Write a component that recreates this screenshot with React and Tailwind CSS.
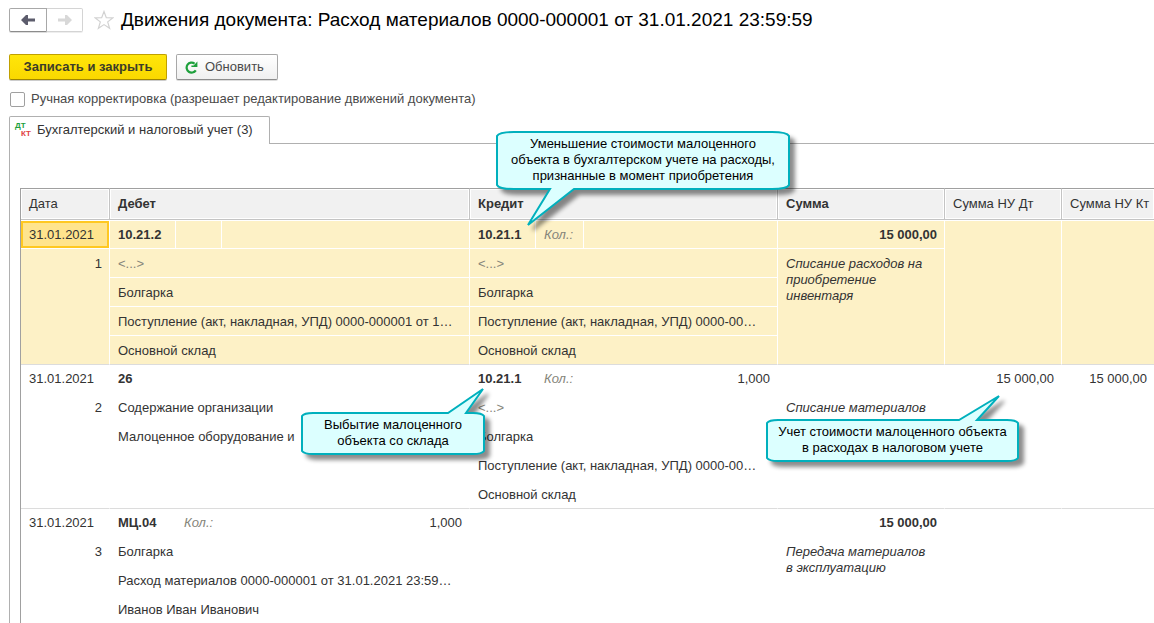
import { clsx } from 'clsx';

const entries = [
  {
    id: 1,
    date: '31.01.2021',
    selected: true,
    debit: { account: '10.21.2', lines: ['<...>', 'Болгарка', 'Поступление (акт, накладная, УПД) 0000-000001 от 1…', 'Основной склад'] },
    credit: { account: '10.21.1', label: 'Кол.:', lines: ['<...>', 'Болгарка', 'Поступление (акт, накладная, УПД) 0000-00…', 'Основной склад'] },
    sum: '15 000,00',
    note: ['Списание расходов на', 'приобретение', 'инвентаря'],
  },
  {
    id: 2,
    date: '31.01.2021',
    debit: { account: '26', lines: ['Содержание организации', 'Малоценное оборудование и'] },
    credit: { account: '10.21.1', label: 'Кол.:', qty: '1,000', lines: ['<...>', 'Болгарка', 'Поступление (акт, накладная, УПД) 0000-00…', 'Основной склад'] },
    note: ['Списание материалов'],
    taxDebit: '15 000,00',
    taxCredit: '15 000,00',
  },
  {
    id: 3,
    date: '31.01.2021',
    debit: { account: 'МЦ.04', label: 'Кол.:', qty: '1,000', lines: ['Болгарка', 'Расход материалов 0000-000001 от 31.01.2021 23:59…', 'Иванов Иван Иванович'] },
    sum: '15 000,00',
    note: ['Передача материалов', 'в эксплуатацию'],
  },
];

function ArrowIcon({ className }) {
  return (
    <svg viewBox="0 0 14 10" className={clsx('w-[14px] h-[10px]', className)} aria-hidden="true">
      <path d="M0 5 5 0H7V3.6H14V6.4H7V10H5Z" fill="currentColor" />
    </svg>
  );
}

function Account({ data, selected }) {
  const line = selected ? 'border-white' : 'border-transparent';

  return (
    <div>
      <div className={clsx('flex h-7 items-center border-b', line)}>
        <div className={clsx('w-[66px] h-full shrink-0 border-r pl-2 leading-[27px] font-bold', line)}>{data.account}</div>
        <div
          className={clsx(
            'h-full shrink-0 border-r pl-2 leading-[27px] italic text-[#85857a]',
            data.label ? 'w-12' : 'w-[46px]',
            line
          )}
        >
          {data.label}
        </div>
        <div className="flex-1 pr-[7px] text-right">{data.qty}</div>
      </div>
      {data.lines.map((text) => (
        <div
          key={text}
          className={clsx(
            'h-[29px] border-b pl-2 leading-[29px] whitespace-nowrap overflow-hidden last:h-7 last:border-b-0',
            text === '<...>' && 'text-[#85857a]',
            line
          )}
        >
          {text}
        </div>
      ))}
    </div>
  );
}

function EntryRow({ entry }) {
  const { selected } = entry;
  const cell = clsx(
    'p-0 align-top border-b border-b-[#dcdcdc] border-r',
    selected ? 'border-r-white bg-[#fdf1c6]' : 'border-r-transparent'
  );

  return (
    <tr>
      <td className={cell}>
        <div
          className={clsx(
            'h-[27px] border-2 pl-1.5 leading-[23px]',
            selected ? 'border-[#ffc821] bg-[#ffe48d]' : 'border-transparent'
          )}
        >
          {entry.date}
        </div>
        <div className={clsx('border-t pr-[7px] text-right leading-[29px]', selected ? 'border-white' : 'border-transparent')}>
          {entry.id}
        </div>
      </td>
      <td className={cell}>
        <Account data={entry.debit} selected={selected} />
      </td>
      <td className={cell}>{entry.credit && <Account data={entry.credit} selected={selected} />}</td>
      <td className={cell}>
        <div className={clsx('h-7 border-b pr-[7px] text-right leading-[27px] font-bold', selected ? 'border-white' : 'border-transparent')}>
          {entry.sum}
        </div>
        <div className="pt-[7px] pl-2 italic leading-4">
          {entry.note.map((text) => (
            <div key={text}>{text}</div>
          ))}
        </div>
      </td>
      <td className={clsx(cell, 'pr-[7px] text-right leading-[27px]')}>{entry.taxDebit}</td>
      <td className={clsx(cell, 'pr-[7px] text-right leading-[27px] border-r-0')}>{entry.taxCredit}</td>
    </tr>
  );
}

function Callout({ className, width, height, path, lines }) {
  return (
    <div className={clsx('absolute', className)}>
      <svg
        width={width}
        height={height}
        className="absolute top-0 left-0 overflow-visible drop-shadow-[5px_5px_2px_rgba(0,0,0,0.45)]"
        aria-hidden="true"
      >
        <path d={path} fill="#dcffff" stroke="#00b0bd" strokeWidth="2" strokeLinejoin="miter" />
      </svg>
      <div className="relative text-center leading-4 text-black">
        {lines.map((text) => (
          <div key={text} className="whitespace-nowrap">{text}</div>
        ))}
      </div>
    </div>
  );
}

export default function App() {
  const head = 'h-8 border-t border-t-[#a0a0a0] border-b border-b-[#c4c4c4] border-r border-r-[#c4c4c4] bg-[#f1f1f1] pl-2 text-left shadow-[inset_0_0_0_1px_#fff]';

  return (
    <div className="min-h-screen overflow-hidden bg-white font-['Liberation_Sans',Arial,sans-serif] text-[13px] text-[#333]">
      {/* Title bar */}
      <header className="flex h-10 items-center pl-[9px]">
        <div className="flex h-6">
          <button type="button" aria-label="Назад" className="flex w-[38px] items-center justify-center rounded-l-xs border border-[#a8a8a8] border-b-[#8c8c8c] text-[#5c5c6c] shadow-[0_1px_0_#ddd]">
            <ArrowIcon />
          </button>
          <button type="button" aria-label="Вперед" disabled className="flex w-9 items-center justify-center rounded-r-xs border border-l-0 border-[#d4d4d4] text-[#d8d8d8] shadow-[0_1px_0_#eee]">
            <ArrowIcon className="rotate-180" />
          </button>
        </div>
        <button type="button" aria-label="В избранное" className="ml-[11px]">
          <svg viewBox="0 0 20 20" className="size-5" aria-hidden="true">
            <path d="M10 1.5 12.3 7.6 19 7.8 13.7 11.9 15.6 18.3 10 14.6 4.4 18.3 6.3 11.9 1 7.8 7.7 7.6Z" fill="none" stroke="#d2d2d2" strokeWidth="1.2" />
          </svg>
        </button>
        <h1 className="ml-[7px] whitespace-nowrap text-[19px] text-black">
          Движения документа: Расход материалов 0000-000001 от 31.01.2021 23:59:59
        </h1>
      </header>

      {/* Commands */}
      <div className="mt-[14px] flex gap-[9px] pl-[9px]">
        <button type="button" className="h-[26px] w-[158px] rounded-xs border border-[#c0a000] border-b-[#a08600] bg-linear-to-b from-[#ffe60a] to-[#fad800] font-bold text-[#3c3c28] shadow-[0_1px_0_#ccc]">
          Записать и закрыть
        </button>
        <button type="button" className="flex h-[26px] w-[102px] items-center rounded-xs border border-[#a8a8a8] border-b-[#8c8c8c] bg-linear-to-b from-white to-[#f0f0f0] pl-2 text-[#4a4a4a] shadow-[0_1px_0_#ddd]">
          <svg viewBox="0 0 13 13" className="size-[13px]" aria-hidden="true">
            <path d="M10.8 9.4A5 5 0 1 1 9.6 2.6" fill="none" stroke="#1ea03c" strokeWidth="2.2" />
            <path d="M12.4 0.4V6H6.4V4.6H8.6Z" fill="#1ea03c" />
          </svg>
          <span className="ml-[7px]">Обновить</span>
        </button>
      </div>

      <label className="mt-[11px] flex h-4 items-center gap-1.5 pl-[10px] text-[#4a4a4a]">
        <input type="checkbox" className="size-[15px] appearance-none rounded-xs border border-[#a0a0a0] bg-white" />
        Ручная корректировка (разрешает редактирование движений документа)
      </label>

      {/* Tabs */}
      <div role="tablist" className="mt-[9px] flex pl-[9px]">
        <button type="button" role="tab" aria-selected="true" className="flex h-7 w-[261px] items-center rounded-t-xs border border-b-0 border-[#b0b0b0] pb-0.5 pl-[5px]">
          <span className="flex w-4 flex-col text-[8px] leading-[8px] font-bold" aria-hidden="true">
            <span className="text-left text-[#1ea03c]">ДТ</span>
            <span className="text-right text-[#e04040]">КТ</span>
          </span>
          <span className="ml-1.5">Бухгалтерский и налоговый учет (3)</span>
        </button>
        <div className="flex-1 border-b border-[#b0b0b0]" />
      </div>

      <div role="tabpanel" className="ml-[9px] border-l border-[#b0b0b0] pt-11 pl-[10px]">
        <div className="relative">
          <table className="w-full table-fixed border-separate border-spacing-0 border-l border-[#a0a0a0]">
            <colgroup>
              <col className="w-[89px]" />
              <col className="w-[360px]" />
              <col className="w-[308px]" />
              <col className="w-[167px]" />
              <col className="w-[117px]" />
              <col />
            </colgroup>
            <thead>
              <tr>
                <th className={clsx(head, 'font-normal')}>Дата</th>
                <th className={head}>Дебет</th>
                <th className={head}>Кредит</th>
                <th className={head}>Сумма</th>
                <th className={clsx(head, 'font-normal')}>Сумма НУ Дт</th>
                <th className={clsx(head, 'border-r-0 font-normal whitespace-nowrap')}>Сумма НУ Кт</th>
              </tr>
            </thead>
            <tbody className="before:block before:h-px">
              {entries.map((entry) => (
                <EntryRow key={entry.id} entry={entry} />
              ))}
            </tbody>
          </table>

          {/* Explanations over the table */}
          <Callout
            className="-top-[57px] left-[476px] w-[294px] pt-[5px]"
            width={294}
            height={96}
            path="M1 5Q3 1 18 1H276Q291 1 293 5V54Q291 58 276 58H78L32 94L54 58H18Q3 58 1 54Z"
            lines={['Уменьшение стоимости малоценного', 'объекта в бухгалтерском учете на расходы,', 'признанные в момент приобретения']}
          />
          <Callout
            className="top-[224px] left-[281px] w-[184px] pt-[5px]"
            width={184}
            height={44}
            path="M1 4Q3 1 12 1H147L182 -23L165 1H172Q181 1 183 4V39Q181 42 172 42H12Q3 42 1 39Z"
            lines={['Выбытие малоценного', 'объекта со склада']}
          />
          <Callout
            className="top-[231px] left-[746px] w-[253px] pt-[5px]"
            width={253}
            height={44}
            path="M1 4Q3 1 12 1H193L233 -23L211 1H241Q250 1 252 4V39Q250 42 241 42H12Q3 42 1 39Z"
            lines={['Учет стоимости малоценного объекта', 'в расходах в налоговом учете']}
          />
        </div>
      </div>
    </div>
  );
}
